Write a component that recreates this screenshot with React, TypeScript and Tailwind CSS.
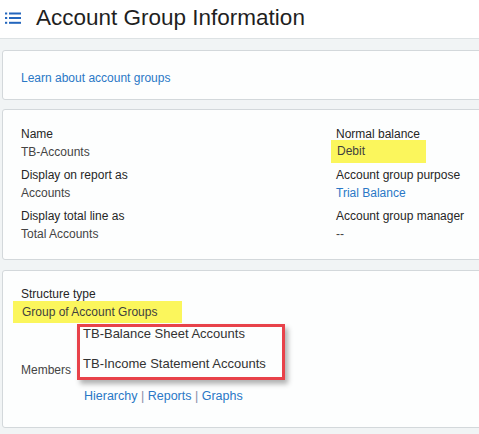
import React from 'react'

const font = { fontFamily: '"Liberation Sans", Arial, sans-serif' }

const ListIcon = () => (
  <svg width="16" height="13" viewBox="0 0 16 13" className="shrink-0">
    <g fill="#2466bd">
      <rect x="0" y="0.5" width="2.2" height="2" />
      <rect x="4" y="0.5" width="12" height="2" />
      <rect x="0" y="5" width="2.2" height="2" />
      <rect x="4" y="5" width="12" height="2" />
      <rect x="0" y="9.8" width="2.2" height="2" />
      <rect x="4" y="9.8" width="12" height="2" />
    </g>
  </svg>
)

interface Field {
  label: string
  value: string
  link?: boolean
  mark?: boolean
}

const leftFields: Field[] = [
  { label: 'Name', value: 'TB-Accounts' },
  { label: 'Display on report as', value: 'Accounts' },
  { label: 'Display total line as', value: 'Total Accounts' },
]

const rightFields: Field[] = [
  { label: 'Normal balance', value: 'Debit', mark: true },
  { label: 'Account group purpose', value: 'Trial Balance', link: true },
  { label: 'Account group manager', value: '--' },
]

const FieldList = ({ fields }: { fields: Field[] }) => (
  <div className="flex flex-col gap-[5px]">
    {fields.map((f) => (
      <div key={f.label} className="flex flex-col">
        <div className="h-[18px] leading-[18px] text-[#262626]">{f.label}</div>
        {f.mark ? (
          <div className="-ml-[5px] -mt-[3px] mb-[-2px] h-[23px] w-[95px] bg-[#fbf65c] pl-[6px] leading-[23px] text-[#3f3f3f]">
            {f.value}
          </div>
        ) : (
          <div className={`h-[18px] leading-[18px] ${f.link ? 'text-[#2a78c6]' : 'text-[#444]'}`}>
            {f.value}
          </div>
        )}
      </div>
    ))}
  </div>
)

const Card = ({ className, children }: { className: string; children: React.ReactNode }) => (
  <div className={`-mr-[10px] rounded-[3px] border border-[#d3d8db] bg-[#fdfefe] pl-[18px] ${className}`}>
    {children}
  </div>
)

export default function App() {
  return (
    <div className="h-[434px] w-[479px] overflow-hidden bg-[#f1f4f5] text-[12px]" style={font}>
      <div className="flex h-[39px] items-center border-b border-[#dde2e4] bg-white">
        <div className="ml-[5px] mt-[-1px]">
          <ListIcon />
        </div>
        <h1 className="ml-[15px] mt-[-2px] text-[22.5px] leading-none text-[#1f1f1f]">
          Account Group Information
        </h1>
      </div>

      <div className="flex flex-col pl-[2px] pt-[11px]">
        <Card className="flex h-[50px] items-center">
          <a className="mt-[5px] text-[#2a78c6]">Learn about account groups</a>
        </Card>

        <Card className="mt-[9px] h-[151px] pt-[15px]">
          <div className="grid grid-cols-[315px_1fr]">
            <FieldList fields={leftFields} />
            <FieldList fields={rightFields} />
          </div>
        </Card>

        <Card className="mt-[10px] h-[158px] pt-[15px]">
          <div className="h-[16px] leading-[16px] text-[#262626]">Structure type</div>
          <div className="-ml-[8px] -mt-[1px] h-[22px] w-[169px] bg-[#fbf65c] pl-[9px] leading-[22px] text-[#3f3f3f]">
            Group of Account Groups
          </div>
          <div className="mt-[1px] flex items-end gap-[6px]">
            <div className="pb-[1px] leading-[18px] text-[#444]">Members</div>
            <div className="flex w-[208px] flex-col gap-[16px] border-[3px] border-[#e8424a] pb-[6px] pl-[3px] text-[13px] leading-[14px] text-[#333] shadow-[3px_4px_5px_rgba(0,0,0,0.3)]">
              <div>TB-Balance Sheet Accounts</div>
              <div>TB-Income Statement Accounts</div>
            </div>
          </div>
          <div className="mt-[9px] pl-[63px] text-[12.5px] leading-[14px]">
            <a className="text-[#2a78c6]">Hierarchy</a>
            <span className="text-[#8c8fa8]"> | </span>
            <a className="text-[#2a78c6]">Reports</a>
            <span className="text-[#8c8fa8]"> | </span>
            <a className="text-[#2a78c6]">Graphs</a>
          </div>
        </Card>
      </div>
    </div>
  )
}
